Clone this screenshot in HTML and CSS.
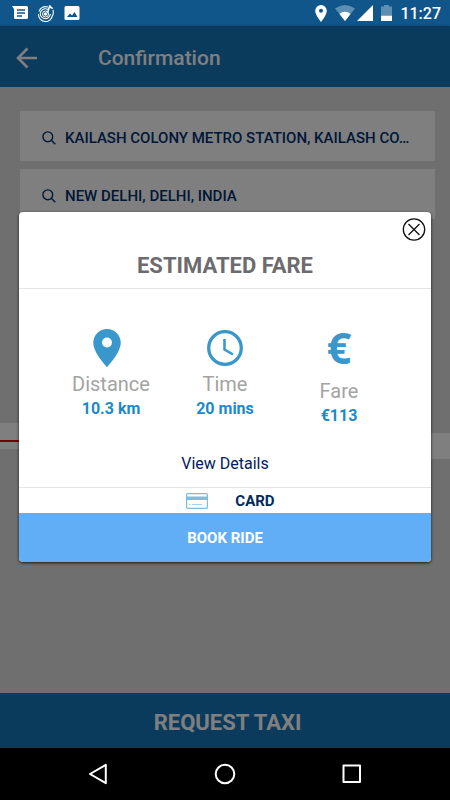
FILE: index.html
```html
<!DOCTYPE html>
<html lang="en">
<head>
<meta charset="utf-8">
<meta name="viewport" content="width=device-width, initial-scale=1">
<title>Confirmation</title>
<link rel="stylesheet" href="styles.css">
</head>
<body>
<div class="status-bar">
  <div class="status-group notices">
    <svg width="16" height="16" viewBox="0 0 16 16" aria-hidden="true"><path d="M0 1h14.500Q16 1 16 2.500v10Q16 14 14.500 14H3.500Q2 14 2 12.500V4z" fill="#fff"/><path d="M5 5h8M5 8h8M5 11h5" stroke="#10568a" stroke-width="1.300"/></svg>
    <svg width="18" height="18" viewBox="0 0 18 18" fill="none" stroke="#fff" aria-hidden="true"><path d="M11 3A7 7 0 0 0 2 7.500M1.500 10A7 7 0 0 0 15.500 11M11 5.500A5 5 0 1 0 13.300 10M16 6q.8 3-.5 6" stroke-width="1.100"/><circle cx="8.500" cy="10" r="3" stroke-width="1"/><circle cx="8.500" cy="10" r="1.300" fill="#fff"/><path d="M10.500 9l2.300-7.500q.5 2.500 3 3" stroke-width="1.500"/></svg>
    <svg width="16" height="16" viewBox="0 0 16 16" aria-hidden="true"><rect x=".5" y="1" width="15" height="14" rx="1.500" fill="#fff"/><path d="M3 12l3-3.500 2 2L10.500 7 13.500 12z" fill="#10568a"/></svg>
  </div>
  <div class="status-group signals">
    <svg width="12" height="17" viewBox="0 0 12 17" aria-hidden="true"><path fill-rule="evenodd" d="M6 0a5.800 5.800 0 0 1 5.800 5.800C11.800 10 6 17 6 17S.2 10 .2 5.800A5.800 5.800 0 0 1 6 0zm0 3.800a2 2 0 1 0 0 4 2 2 0 0 0 0-4z" fill="#fff"/></svg>
    <div class="network">
      <svg width="20" height="16" viewBox="0 0 20 16" aria-hidden="true"><path d="M0 3.500Q10-3.500 20 3.500L10 16z" fill="#5d8fb3"/><path d="M4.500 9Q10 4.500 15.500 9L10 16z" fill="#fff"/></svg>
      <svg width="16" height="16" viewBox="0 0 16 16" aria-hidden="true"><path d="M16 0v16H0z" fill="#fff"/></svg>
    </div>
    <svg width="11" height="16" viewBox="0 0 11 16" aria-hidden="true"><path d="M3 0h5v1.500h3V10H0V1.500h3z" fill="#5d8fb3"/><path d="M0 10.500h11V16H0z" fill="#fff"/></svg>
    <time>11:27</time>
  </div>
</div>

<div class="screen">
  <header class="app-bar">
    <button class="back" aria-label="Back"><svg width="22" height="22" viewBox="0 0 22 22" fill="none" stroke="#fff" stroke-width="2.600" aria-hidden="true"><path d="M21 11H2.500M11.500 1.500L2 11l9.500 9.500"/></svg></button>
    <h1>Confirmation</h1>
  </header>
  <main class="map">
    <form class="route">
      <label class="place">
        <svg width="14" height="14" viewBox="0 0 14 14" fill="none" stroke="#003070" stroke-width="1.400" aria-hidden="true"><circle cx="5.800" cy="5.800" r="4.900"/><path d="M9.300 9.300L13.300 13.300"/></svg>
        <input type="text" aria-label="Pickup" value="KAILASH COLONY METRO STATION, KAILASH CO…">
      </label>
      <label class="place">
        <svg width="14" height="14" viewBox="0 0 14 14" fill="none" stroke="#003070" stroke-width="1.400" aria-hidden="true"><circle cx="5.800" cy="5.800" r="4.900"/><path d="M9.300 9.300L13.300 13.300"/></svg>
        <input type="text" aria-label="Destination" value="NEW DELHI, DELHI, INDIA">
      </label>
    </form>
    <div class="road"><div class="road-left"></div><div class="road-right"></div></div>
  </main>
  <button class="request">REQUEST TAXI</button>

  <div class="scrim">
    <section class="dialog" role="dialog" aria-labelledby="fare-title">
      <button class="close" aria-label="Close"><svg width="24" height="24" viewBox="0 0 24 24" fill="none" stroke="#111" stroke-width="1.300" aria-hidden="true"><circle cx="12" cy="11.500" r="10.700"/><path d="M6.500 6l11 11M17.500 6l-11 11"/></svg></button>
      <h2 id="fare-title">ESTIMATED FARE</h2>
      <div class="stats">
        <div class="stat">
          <svg class="pin" width="28" height="38" viewBox="0 0 28 38" aria-hidden="true"><path fill-rule="evenodd" d="M14 0a13.700 13.700 0 0 1 13.700 13.700C27.700 24 14 38 14 38S.3 24 .3 13.700A13.700 13.700 0 0 1 14 0zm0 8.500a5 5 0 1 0 0 10 5 5 0 0 0 0-10z" fill="#3a97cc"/></svg>
          <span class="name">Distance</span>
          <strong>10.3 km</strong>
        </div>
        <div class="stat">
          <svg width="38" height="38" viewBox="0 0 38 38" fill="none" stroke="#3a97cc" aria-hidden="true"><circle cx="19" cy="19" r="16.300" stroke-width="3.300"/><path d="M18.500 10v10.500l8.500 5" stroke-width="2.600"/></svg>
          <span class="name">Time</span>
          <strong>20 mins</strong>
        </div>
        <div class="stat">
          <span class="euro" aria-hidden="true">€</span>
          <span class="name">Fare</span>
          <strong>€113</strong>
        </div>
      </div>
      <a class="details" href="#">View Details</a>
      <div class="payment">
        <svg width="22" height="16" viewBox="0 0 22 16" aria-hidden="true"><rect x=".6" y=".6" width="20.800" height="14.800" rx="1" fill="#fff" stroke="#7cbde1" stroke-width="1.200"/><path d="M1 3.500h20v3.500H1z" fill="#7cbde1"/><path d="M3 11.500h1.500M6 11.500h10" stroke="#a9d3eb" stroke-width="1.200"/></svg>
        <span>CARD</span>
      </div>
      <button class="book">BOOK RIDE</button>
    </section>
  </div>
</div>

<nav class="nav-bar">
  <button aria-label="Back"><svg width="22" height="22" viewBox="0 0 22 22" fill="none" stroke="#fff" stroke-width="2" stroke-linejoin="round" aria-hidden="true"><path d="M18.800 1.800v18.400L3 11z"/></svg></button>
  <button aria-label="Home"><svg width="22" height="22" viewBox="0 0 22 22" fill="none" stroke="#fff" stroke-width="2" aria-hidden="true"><circle cx="11" cy="11" r="9.300"/></svg></button>
  <button aria-label="Recent apps"><svg width="22" height="22" viewBox="0 0 22 22" fill="none" stroke="#fff" stroke-width="2" stroke-linejoin="round" aria-hidden="true"><rect x="2.500" y="2.500" width="16.500" height="16.500"/></svg></button>
</nav>
</body>
</html>
```
FILE: styles.css
```css
* { box-sizing: border-box; }
body {
  margin: 0;
  min-height: 100vh;
  display: flex;
  flex-direction: column;
  font-family: Roboto, "Liberation Sans", sans-serif;
  background: #000;
}
button { border: 0; padding: 0; background: none; font: inherit; color: inherit; cursor: pointer; }
svg { display: block; flex: none; }
h1, h2 { margin: 0; }

.status-bar {
  display: flex;
  justify-content: space-between;
  align-items: center;
  height: 26px;
  padding: 0 9px 0 12px;
  background: #10568a;
  color: #fff;
}
.status-group { display: flex; align-items: center; }
.notices { gap: 9px; }
.signals { gap: 8px; }
.network { display: flex; gap: 2px; }
time { padding-top: 2px; font-size: 16px; font-weight: 500; line-height: 20px; }

.screen { position: relative; flex: 1; display: flex; flex-direction: column; }
.app-bar {
  display: flex;
  align-items: center;
  gap: 60px;
  height: 61px;
  padding: 2px 16px 0;
  background: #1474b8;
  color: #fff;
  box-shadow: 0 1px 3px rgba(0, 0, 0, .5);
}
h1 { font-size: 21px; font-weight: 500; line-height: 28px; }

.map { flex: 1; background: #dfdfdf; }
.route { display: flex; flex-direction: column; gap: 8px; padding: 24px 15px 0 20px; }
.place {
  display: flex;
  align-items: center;
  gap: 9px;
  height: 50px;
  padding: 3px 19px 0 22px;
  background: #fff;
}
.place input {
  flex: 1;
  min-width: 0;
  border: 0;
  padding: 0;
  background: none;
  color: #003070;
  font: 500 15px/20px Roboto, "Liberation Sans", sans-serif;
  text-overflow: ellipsis;
}
.road { display: flex; justify-content: space-between; margin-top: 204px; }
.road-left { width: 50%; height: 26px; padding-top: 17px; background: #fff; }
.road-left::before { content: ""; display: block; height: 2px; background: #e00000; }
.road-right { width: 50%; height: 26px; margin-top: 10px; background: #fff; }
.request {
  height: 55px;
  padding: 4px 0 0 5px;
  background: #1474b8;
  color: #fff;
  font-size: 22px;
  font-weight: 700;
}

.scrim {
  position: absolute;
  inset: 0;
  display: flex;
  align-items: center;
  padding: 0 19px;
  background: rgba(0, 0, 0, .5);
}
.dialog {
  position: relative;
  flex: 1;
  display: flex;
  flex-direction: column;
  overflow: hidden;
  border-radius: 4px;
  background: #fff;
  box-shadow: 0 1px 3px rgba(0, 0, 0, .8);
}
.close { position: absolute; top: 6px; right: 5px; }
h2 {
  padding: 40px 0 8px;
  border-bottom: 1px solid #e6e6e6;
  color: #6c6c70;
  font-size: 22px;
  font-weight: 700;
  line-height: 28px;
  text-align: center;
}
.stats {
  display: grid;
  grid-template-columns: repeat(3, 1fr);
  padding: 40px 35px 0;
}
.stat { display: flex; flex-direction: column; align-items: center; }
.pin { margin-right: 8px; }
.name { margin-top: 5px; color: #a3a3a3; font-size: 20px; line-height: 24px; }
.stat strong { color: #1c8ac6; font-size: 16px; font-weight: 700; line-height: 26px; }
.euro { padding-bottom: 7px; color: #3a97cc; font: 700 43px/38px "Noto Sans", sans-serif; }
.details {
  align-self: center;
  margin: 23px 0 11px;
  color: #00205b;
  font-size: 16px;
  line-height: 24px;
  text-decoration: none;
}
.payment {
  display: flex;
  justify-content: center;
  align-items: center;
  gap: 27px;
  height: 26px;
  padding-left: 11px;
  border-top: 1px solid #e6e6e6;
  color: #002a60;
  font-size: 15px;
  font-weight: 700;
}
.book {
  height: 49px;
  background: #61aef7;
  color: #fff;
  font-size: 15px;
  font-weight: 700;
}

.nav-bar {
  display: grid;
  grid-template-columns: repeat(3, 127px);
  justify-content: center;
  height: 52px;
  background: #000;
}
.nav-bar button { display: grid; place-items: center; }
```
